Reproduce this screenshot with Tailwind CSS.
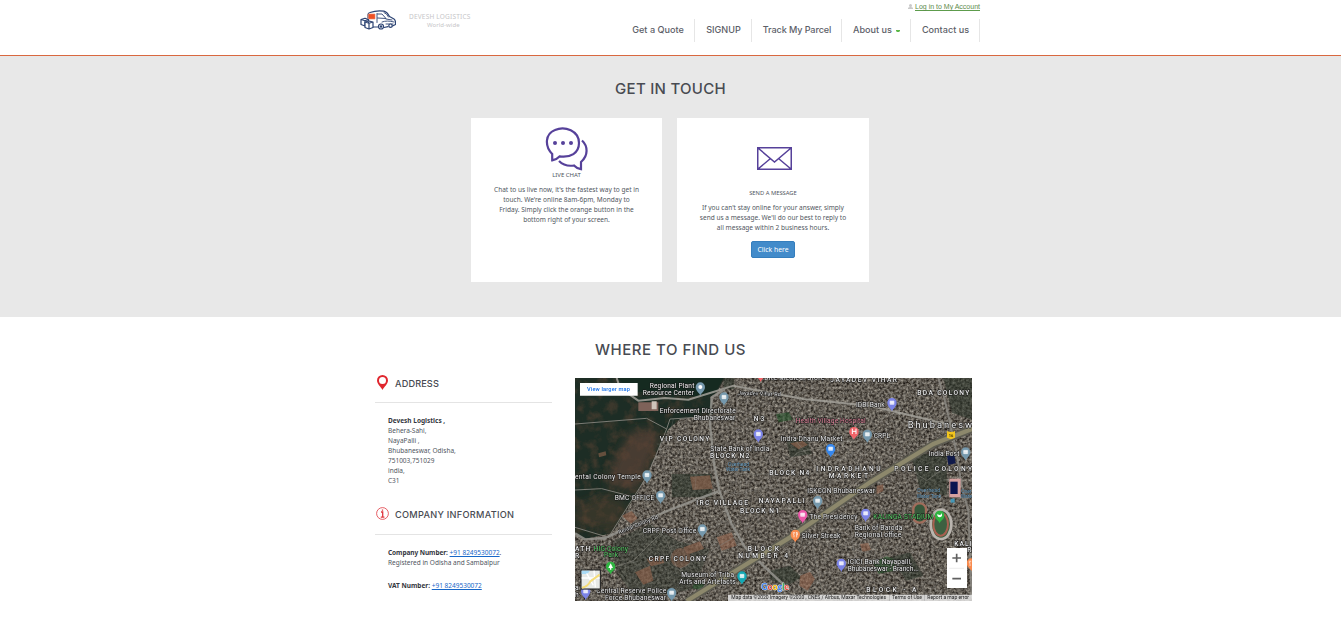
<!DOCTYPE html>
<html lang="en">
<head>
<meta charset="utf-8">
<title>Devesh Logistics - Contact us</title>
<script src="https://cdn.jsdelivr.net/npm/@tailwindcss/browser@4"></script>
</head>
<body class="w-[1341px] h-[631px] overflow-hidden bg-white font-['Noto_Sans',sans-serif] text-[#50565e]">
<header class="h-14 border-b border-[#d9683f]">
  <div class="ml-[360px] flex w-[620px] justify-between">
    <div class="flex pt-[10px]">
      <svg class="h-5 w-9" viewBox="0 0 36 20" fill="none" stroke="#2c4373" stroke-width="1.2" stroke-linejoin="round" stroke-linecap="round">
        <path d="M8 8V4.500q0-1.500 2-2Q17 0 24 1.200q3 .8 5.500 5.300l4.500 2.500q1.500 1 1.500 3.500v2L32.500 16M12 17h6M24 17.500l4-.8"/>
        <path d="M17 3.500v9M17.500 4H22l4 4.500-8.500-.5M24 2.500q3 1 4.500 4.500M26 9l6 1M22 12q5-2 12 0M26 14h7" stroke-width=".9"/>
        <rect x="8.500" y="4" width="6.500" height="5" fill="#ee5125" stroke="#ee8465" stroke-width=".6"/>
        <path d="M1 9.500l4-1.300 3.500 1.300v5L5 16l-4-1.500zM1 9.500l4 1.200 3.500-1.200M5 11v5" fill="#fff"/>
        <path d="M5 12l4-1 4 1v5.500L9 19l-4-1.500zM5 12l4 1.300L13 12M9 13.500V19" fill="#fff"/>
        <circle cx="21" cy="16.500" r="2.500" fill="#fff"/><circle cx="21" cy="16.500" r=".7"/><circle cx="30.500" cy="15.700" r="1.700" fill="#fff"/>
      </svg>
      <div class="ml-[13px] mt-[2px] text-[#c6c6c8]">
        <p class="text-[6.500px] leading-[9px] tracking-[.2px]">DEVESH LOGISTICS</p>
        <p class="pl-[18px] text-[6px] leading-[9px] tracking-[.05px]">World-wide</p>
      </div>
    </div>
    <div class="flex flex-col items-end">
      <a href="#" class="mt-[2px] flex h-[9px] items-center gap-[2px] font-['Liberation_Sans',sans-serif] text-[7px] leading-[9px] text-[#5d8c4c]">
        <svg class="size-[5px]" viewBox="0 0 10 10" fill="#c9c9c9"><circle cx="5" cy="3" r="3"/><path d="M0 10V8q1-2 5-2t5 2v2z"/></svg>
        <span class="border-b border-[#5d9c4c] leading-[7px]">Log in to My Account</span>
      </a>
      <nav class="mt-[8px] flex h-[23px] font-['Inter',sans-serif] text-[9.100px] font-medium leading-[22px] text-[#5c6068] [&>a]:border-r [&>a]:border-[#e6e6e6] [&>a]:text-center [&>a]:whitespace-nowrap">
        <a href="#" class="w-[74px] pl-px">Get a Quote</a>
        <a href="#" class="w-[57px] pl-px">SIGNUP</a>
        <a href="#" class="w-[90px] tracking-[-.1px] pl-px">Track My Parcel</a>
        <a href="#" class="flex w-[69px] justify-center gap-[4px] pl-px">About us <svg class="mt-[11px] h-[2px] w-[4px]" viewBox="0 0 4 2" fill="#5cb848"><path d="M0 0h4v1L3 2H1L0 1z"/></svg></a>
        <a href="#" class="w-[69px] pl-px">Contact us</a>
      </nav>
    </div>
  </div>
</header>

<section class="h-[261px] bg-[#e8e8e8]">
  <h2 class="pt-[22px] text-center font-['Inter',sans-serif] text-[15px] font-medium leading-[22px] tracking-[.27px] text-[#484b52]">GET IN TOUCH</h2>
  <div class="ml-[471px] mt-[18px] flex w-[398px] justify-between text-center text-[6.550px] leading-[10px]">
    <article class="h-[164px] w-[191px] bg-white pt-[9px]">
      <svg class="ml-[74px] h-[44px] w-[44px]" viewBox="0 0 44 44" fill="none" stroke="#56419a" stroke-width="2.200">
        <path d="M7.200 27C-.5 19 0 7 10 3c10-4.500 24 1 24 13 0 10-8.500 15-19.500 13.400C12.500 31.500 10 33 7.200 33.300z"/>
        <path d="M37 13.500C43 19 43.500 28.500 36 35v7.200c-3-.5-5.200-1.700-7-3.700-5.500.8-11-.4-15-4.500"/>
        <g fill="#56419a" stroke="none"><circle cx="10" cy="16" r="2"/><circle cx="18" cy="16" r="2"/><circle cx="26" cy="16" r="2"/></g>
      </svg>
      <h3 class="text-[6px] leading-[8px]">LIVE CHAT</h3>
      <p class="mt-[6px]">Chat to us live now, it's the fastest way to get in<br>touch. We're online 8am-6pm, Monday to<br>Friday. Simply click the orange button in the<br>bottom right of your screen.</p>
    </article>
    <article class="h-[164px] w-[192px] bg-white pt-[29px]">
      <svg class="ml-[80px] h-[23px] w-[35px]" viewBox="0 0 35 23" fill="none" stroke="#56419a" stroke-width="1.500"><path d="M.75.75h33.500v21.500H.75zM1 1l16.500 14L34 1M1 22l12.200-10.300M34 22L21.800 11.700"/></svg>
      <h3 class="mt-[18px] text-[5.800px] leading-[10px]">SEND A MESSAGE</h3>
      <p class="mt-[5px]">If you can't stay online for your answer, simply<br>send us a message. We'll do our best to reply to<br>all message within 2 business hours.</p>
      <button class="mt-[8px] h-[17px] w-[44px] rounded-[2px] border border-[#357ebd] bg-[#428bca] text-[6.800px] leading-[15px] text-white">Click here</button>
    </article>
  </div>
</section>

<section>
  <h2 class="pt-[22px] text-center font-['Inter',sans-serif] text-[15px] font-medium leading-[22px] tracking-[.52px] text-[#484b52]">WHERE TO FIND US</h2>
  <div class="ml-[375px] mt-[17px] flex gap-[23px]">
    <div class="w-[177px] text-[6.500px] leading-[10px]">
      <h3 class="-mt-[3px] flex h-[28px] items-start border-b border-[#e4e4e4] pl-[2px] font-['Inter',sans-serif] text-[9.200px] font-medium leading-[17px] tracking-[.12px] text-[#484b52]">
        <svg class="mr-[7px] h-[15px] w-[11px]" viewBox="0 0 11 15" fill="#e0262e"><path fill-rule="evenodd" d="M5.500 0A5.500 5.500 0 0 0 0 5.500C0 9 4 12 5.500 15 7 12 11 9 11 5.500A5.500 5.500 0 0 0 5.500 0zm0 2a3.500 3.500 0 1 1 0 7 3.500 3.500 0 0 1 0-7z"/></svg>ADDRESS
      </h3>
      <p class="pl-[13px] pt-[13px]"><b class="text-[#34373e]">Devesh Logistics ,</b><br>Behera-Sahi,<br>NayaPalli ,<br>Bhubaneswar, Odisha,<br>751003,751029<br>india,<br>C31</p>
      <h3 class="mt-[21px] flex h-[28px] items-start border-b border-[#e4e4e4] pl-px font-['Inter',sans-serif] text-[9.200px] font-medium leading-[15px] tracking-[.27px] text-[#484b52]">
        <svg class="mr-[6px] h-[13px] w-[13px]" viewBox="0 0 13 13" fill="none" stroke="#e0363e"><circle cx="6.500" cy="6.500" r="5.900" stroke-width=".8"/><path stroke-width="1.300" d="M5 5h1.700v5M4.800 10.200h3.600M6.500 2.400v1.300"/></svg>COMPANY INFORMATION
      </h3>
      <p class="whitespace-nowrap pl-[13px] pt-[13px]"><b class="tracking-[-.06px] text-[#34373e]">Company Number:</b> <a href="#" class="text-[#1767c8] underline">+91 8249530072</a>.<br>Registered in Odisha and Sambalpur</p>
      <p class="pl-[13px] pt-[13px]"><b class="text-[#34373e]">VAT Number:</b> <a href="#" class="text-[#1767c8] underline">+91 8249530072</a></p>
    </div>
    <svg class="h-[223px] w-[397px]" viewBox="15 12 1191 669" font-family="Roboto, sans-serif">
      <defs>
        <filter id="city" x="0" y="0" width="100%" height="100%" color-interpolation-filters="sRGB"><feTurbulence type="fractalNoise" baseFrequency=".13" numOctaves="3" seed="8"/><feColorMatrix values=".75 .1 0 0 -.045 .75 .08 0 0 -.055 .72 .05 0 0 -.055 0 0 0 0 1"/></filter>
        <filter id="wood" x="0" y="0" width="100%" height="100%" color-interpolation-filters="sRGB"><feTurbulence type="fractalNoise" baseFrequency=".035" numOctaves="4" seed="4"/><feColorMatrix values="0 0 0 0 .42 0 0 0 0 .29 0 0 0 0 .22 2.800 0 0 0 -1.200"/></filter>
        <filter id="soft"><feGaussianBlur stdDeviation="14"/></filter>
        <clipPath id="forest"><path d="M15 12H465L440 55 420 70 430 120 330 135 295 165 270 215 235 290 200 360 125 478 40 496 15 480z"/></clipPath>
        <clipPath id="view"><path d="M15 12H1206V681H15z"/></clipPath>
        <g id="pin"><path d="M0 26C-3 17-14 12-14 0a14 14 0 0 1 28 0C14 12 3 17 0 26z"/><path d="M-6-5H6V5H-6zM-6-1H6M-2-5V5M2-5V5" fill="#fff" fill-opacity=".65" stroke="#fff" stroke-width="1.500"/></g>
        <g id="dot"><path d="M0 26C-3 17-14 12-14 0a14 14 0 0 1 28 0C14 12 3 17 0 26z"/><circle r="6" fill="#fff"/></g>
      </defs>
      <g clip-path="url(#view)">
      <rect x="15" y="12" width="1191" height="669" filter="url(#city)"/>
      <g clip-path="url(#forest)"><path fill="#1d2d25" d="M15 12H470V500H15z"/><g filter="url(#soft)"><path d="M130 265L185 170 250 165 270 190 230 290 200 350 110 330z" fill="#5c4536" opacity=".7"/><path d="M15 400l90-40 70 30-40 80-120-20z" fill="#4a3a2e" opacity=".6"/></g><rect x="15" y="12" width="450" height="490" filter="url(#wood)" opacity=".4"/><path d="M205 85h60v26h-60z" fill="#7e6259"/><path d="M245 82h15v24h-15z" fill="#cec5bb"/></g>
      <path d="M145 12H460L440 50 400 70 330 65 180 50z" fill="#152a20"/>
      <g fill="#293329" opacity=".55"><path d="M1120 12h86v125l-60-20zM460 12h32v34h-32zM960 550l60-15 40 70-50 15zM1020 235l110 10v120l-80-20zM650 200l60-10 15 50-65 10zM600 590l60-15 35 35-50 30-45-25zM305 300h120v70H305z"/><path d="M130 500l110-50 80 50 100 25-50 120-170 30-60-80z" opacity=".8"/></g>
      <g fill="#94664f" opacity=".6"><path d="M360 308l60-4 8 40-60 4zM155 425l30-14 18 22-20 16zM195 595l45-20 10 45-30 12zM440 490l45-15 15 40-45 15zM340 520l50-18 12 22-50 18zM660 208l38-8 16 12-28 14zM230 555l45-10 8 22-40 10zM870 510l25-4 8 22-26 5zM85 238l22-6 2 12-22 6zM690 605l30-12 15 22-22 35-25-15zM920 335l20-4v20l-20 10z"/><circle cx="332" cy="552" r="30" opacity=".75"/></g>
      <path d="M910 565l40-18 28 12-8 32-45 8zM618 120l38-5 12 22-42 8zM375 620l30 8-10 20-28-5z" fill="#28532d" opacity=".65"/>
      <g fill="none" stroke="#8b8983" stroke-width="3" opacity=".85">
        <path d="M15 150L230 133 290 165 300 135 415 128M15 348L95 344 235 380M15 460l100 30 120-190 55-135"/>
        <path d="M140 12l10 30 55 38 80-8 70 5 65-20 70-22L700 75 900 95 1130 150" stroke-width="6" stroke="#a4a29b"/>
        <path d="M465 45L425 70 420 150 432 270 448 350 485 450 525 520 585 580 650 640" stroke-width="7" stroke="#96958f"/>
        <path d="M15 478l30 18 60-4 80-36 85-36 100-40 75-28" stroke-width="7" stroke="#96958f"/>
        <path d="M1105 12l20 70 30 130 20 120 20 80 10 260" stroke-width="6"/>
        <path d="M450 350l55 10 80-20 50 5 240-120M495 300h110l80-65 170-40M550 75l20 110 80 210 70 60M690 70l-20 120 70 90 130 30M820 90l-15 100 80 110M960 110l-70 80 40 90M1010 280l60 40 70-50M1020 370l20 12 165 30M100 590l90-30 80-80-40-40M240 430l50 70 30 80 40 40M370 420l90 150M300 520l170-80M330 585l170-100M15 570l120 80M720 480l40 190M840 440l30 240M940 400l-50 270M780 500l260 90M1130 600l-70 70" stroke-width="2.500" opacity=".7"/>
      </g>
      <g fill="none" stroke="#aaa79e" stroke-width="1.500" opacity=".4"><path d="M260 210l155 10M250 245l170 8M245 275l180 8M310 135l-35 155M350 135l-25 155M390 130l-15 220M440 110l200 10M440 160l180 5M450 210l190-2M460 260l240 5M470 320l130 5M490 380l230 5M520 430l180 10M500 60v280M530 60v410M600 80v380M640 80v390M720 90l20 280M760 90l-10 280M780 130l200 120M740 160l190 130M730 210l150 100M850 190l-110 110M900 220l-120 130M970 230l-160 130M1040 80l-60 200M800 430l300 70M760 460l280 80M740 520l300 80M720 570l320 90M800 440l-70 230M900 430l-90 240M1000 400l-120 270M1080 460l-100 200"/></g>
      <path d="M1206 165L1090 210 900 325 660 490 350 681" fill="none" stroke="#5e5d52" stroke-width="22"/><path d="M1206 165L1090 210 900 325 660 490 350 681" fill="none" stroke="#8d886c" stroke-width="13"/>
      <path d="M1131 246l22-5 4 27-22 5z" fill="#101a4a"/><path d="M1138 314h34v56h-34z" fill="#d5a1a0"/><path d="M1141 323h22v37h-22z" fill="#0b1450"/><path d="M1142 374h12v12h-12z" fill="#4497b6"/>
      <rect x="1030" y="388" width="38" height="58" rx="18" fill="#37583b" stroke="#a06d5c" stroke-width="7"/><ellipse cx="1113" cy="451" rx="31" ry="44" fill="#3d6041" stroke="#bab5af" stroke-width="8"/><ellipse cx="1112" cy="451" rx="22" ry="34" fill="none" stroke="#a85f50" stroke-width="6"/>

      <g font-size="20" fill="#ededed" stroke="#161616" stroke-width="3" paint-order="stroke">
        <text x="239" y="42" textLength="134">Regional Plant</text><text x="218" y="62" textLength="154">Resource Center</text>
        <text x="269" y="118" textLength="228">Enforcement Directorate</text><text x="371" y="137" textLength="125">Bhubaneswar</text>
        <text x="504" y="62" font-size="16" textLength="128" transform="rotate(2 504 64)">Jayadev Vihar Rd</text>
        <text x="583" y="17" textLength="180">Bite Medical Store</text>
        <text x="421" y="230" textLength="177">State Bank of India</text><text x="858" y="98" textLength="86">IDBI Bank</text>
        <text x="632" y="202" textLength="185">Indra Dhanu Market</text><text x="911" y="193" textLength="49">CRPL</text>
        <text x="1076" y="247" textLength="92">India Post</text><text x="15" y="316" textLength="197">ental Colony Temple</text>
        <text x="134" y="377" textLength="119">BMC OFFICE</text><text x="218" y="478" textLength="161">CRPF Post Office</text>
        <text x="148" y="480" font-size="16" textLength="126" transform="rotate(-22 148 480)">Rental Colony Rd</text>
        <text x="712" y="358" textLength="203">ISKCON Bhubaneswar</text><text x="718" y="435" textLength="144">The Presidency</text>
        <text x="854" y="468" textLength="143">Bank of Baroda</text><text x="854" y="488" textLength="140">Regional office</text>
        <text x="695" y="493" textLength="116">Silver Streak</text><text x="833" y="571" textLength="192">ICICI Bank Nayapalli,</text><text x="833" y="591" textLength="213">Bhubaneswar - Branch...</text>
        <text x="334" y="610" textLength="158">Museum of Triba</text><text x="328" y="631" textLength="169">Arts and Artefacts</text>
        <text x="79" y="658" textLength="210">Central Reserve Police</text><text x="105" y="678" textLength="183">Force Bhubaneswar</text><text x="15" y="648">a</text><text x="15" y="668">h</text>
      </g>
      <g font-size="20" stroke="#161616" stroke-width="3" paint-order="stroke">
        <text x="677" y="148" fill="#e58ca0" textLength="210">Health Village Hospital</text>
        <g fill="#5ed46b"><text x="910" y="436" textLength="180">KALINGA STADIUM</text><text x="71" y="531" textLength="103">HIG Colony</text><text x="102" y="550" textLength="42">Park</text></g>
        <g font-size="15" fill="#76a9cc" stroke-width="1"><text x="474" y="276" textLength="63">Overhead</text><text x="468" y="291" textLength="72">Water Tank</text><text x="1042" y="355" textLength="68">Overhead</text><text x="1040" y="371" textLength="74">Water Tank</text><text x="1174" y="356">Over</text><text x="1172" y="372">Wate</text></g>
      </g>
      <g font-size="20" font-weight="500" fill="#ededed" stroke="#161616" stroke-width="3" paint-order="stroke">
        <text x="781" y="23" textLength="200">JAYADEV VIHAR</text><text x="1042" y="64" textLength="156">BDA COLONY</text><text x="551" y="140" textLength="32">N 3</text>
        <text x="269" y="202" textLength="149">VIP COLONY</text><text x="420" y="252" textLength="118">BLOCK N2</text><text x="598" y="304" textLength="120">BLOCK N4</text>
        <text x="739" y="290" textLength="193">INDRADHANU</text><text x="776" y="311" textLength="118">MARKET</text><text x="973" y="290" textLength="233">POLICE COLONY</text>
        <text x="379" y="392" textLength="155">IRC VILLAGE</text><text x="566" y="388" textLength="138">NAYAPALLI</text><text x="510" y="417" textLength="117">BLOCK N1</text>
        <text x="533" y="530" textLength="94">BLOCK</text><text x="505" y="553" textLength="149">NUMBER 4</text><text x="236" y="562" textLength="172">CRPF COLONY</text>
        <text x="889" y="655" textLength="150">BLOCK - A</text><text x="1153" y="515" textLength="52">KALI</text><text x="1192" y="535">R</text><text x="15" y="532" textLength="46">ATH</text><text x="15" y="552">R</text>
        <text x="1013" y="161" font-size="28" font-weight="400" textLength="193">Bhubanesw</text>
      </g>
      <g fill="#7598ac"><use href="#dot" x="391" y="39"/><use href="#pin" x="462" y="69"/><use href="#pin" x="892" y="181"/><use href="#pin" x="1187" y="234"/><use href="#pin" x="231" y="303"/><use href="#pin" x="272" y="364"/><use href="#pin" x="397" y="465"/><use href="#pin" x="743" y="380"/><use href="#pin" x="305" y="656"/></g>
      <g fill="#7b83e6"><use href="#pin" x="565" y="180"/><use href="#pin" x="966" y="86"/><use href="#pin" x="887" y="418"/><use href="#pin" x="814" y="568"/><use href="#pin" x="47" y="652"/></g>
      <use href="#dot" x="572" y="-2" fill="#f26469"/><use href="#pin" x="782" y="224" fill="#3687ed"/><use href="#pin" x="698" y="422" fill="#eb58a9"/><use href="#pin" x="516" y="606" fill="#13a9b5"/>
      <g fill="#f98b4e"><g id="food"><path d="M676 505c-3-9-14-10-14-24a14 14 0 0 1 28 0c0 14-11 15-14 24z"/><path d="M670 474v5q0 3 2 3v8M674 474v5M680 490v-16q3 2 2 9h-2" fill="none" stroke="#fff" stroke-width="2"/></g><use href="#food" x="528" y="86"/></g>
      <path d="M852 197c-3-9-14-11-14-24a14 14 0 0 1 28 0c0 13-11 15-14 24z" fill="#f26469"/><path d="M847 164v16M858 164v16M847 172h11" stroke="#fff" stroke-width="3"/>
      <g fill="#30b542"><path d="M122 601c-3-9-14-11-14-24a14 14 0 0 1 28 0c0 13-11 15-14 24zM1109 448c-3-9-14-11-14-24a14 14 0 0 1 28 0c0 13-11 15-14 24z"/><path d="M122 568l7 14h-14zM120 582h4v5h-4zM1102 420q10 8 14-3v9q-8 8-14-1z" fill="#fff"/></g>
      <path d="M1131 171q12 6 24 0v20l-12 5-12-5z" fill="#f2c51d"/><text x="1136" y="188" font-size="12" fill="#4a3a00" font-weight="700">16</text>
      <g><path d="M30 27h173v38H30z" fill="#fff"/><text x="51" y="51" font-size="17" font-weight="500" fill="#1a73e8" textLength="129">View larger map</text></g>
      <path d="M33 588h58v57H33z" fill="#e7e9e6" stroke="#171717" stroke-width="3"/><path d="M35 590h25l-8 10H35z" fill="#a9daf5"/><path d="M35 612h54M50 598l20 36M72 590l4 50" stroke="#fff" stroke-width="4"/><path d="M36 641q18-4 25-19l28-20" fill="none" stroke="#f5dc78" stroke-width="6"/>
      <path d="M1131 522h60v120h-60z" fill="#fff"/><path d="M1138 583h44" stroke="#e4e4e4" stroke-width="2"/><path d="M1147 552h26M1160 539v26M1147 614h26" stroke="#606060" stroke-width="5"/>
      <path d="M474 662h732v19H474z" fill="#ededed" fill-opacity=".82"/>
      <g font-size="15" fill="#202020"><text x="484" y="676" textLength="464">Map data ©2020 Imagery ©2020 , CNES / Airbus, Maxar Technologies</text><text x="966" y="676" textLength="90">Terms of Use</text><text x="1072" y="676" textLength="125">Report a map error</text><path d="M957 663h2v17h-2zM1063 663h2v17h-2z" fill="#aaa"/></g>
      <text x="574" y="649" font-size="26" font-weight="700" font-family="Lato, sans-serif" stroke="#fff" stroke-width="2" paint-order="stroke"><tspan fill="#4285f4">G</tspan><tspan fill="#ea4335">o</tspan><tspan fill="#fbbc05">o</tspan><tspan fill="#4285f4">g</tspan><tspan fill="#34a853">l</tspan><tspan fill="#ea4335">e</tspan></text>
      </g>
    </svg>
  </div>
</section>
</body>
</html>
